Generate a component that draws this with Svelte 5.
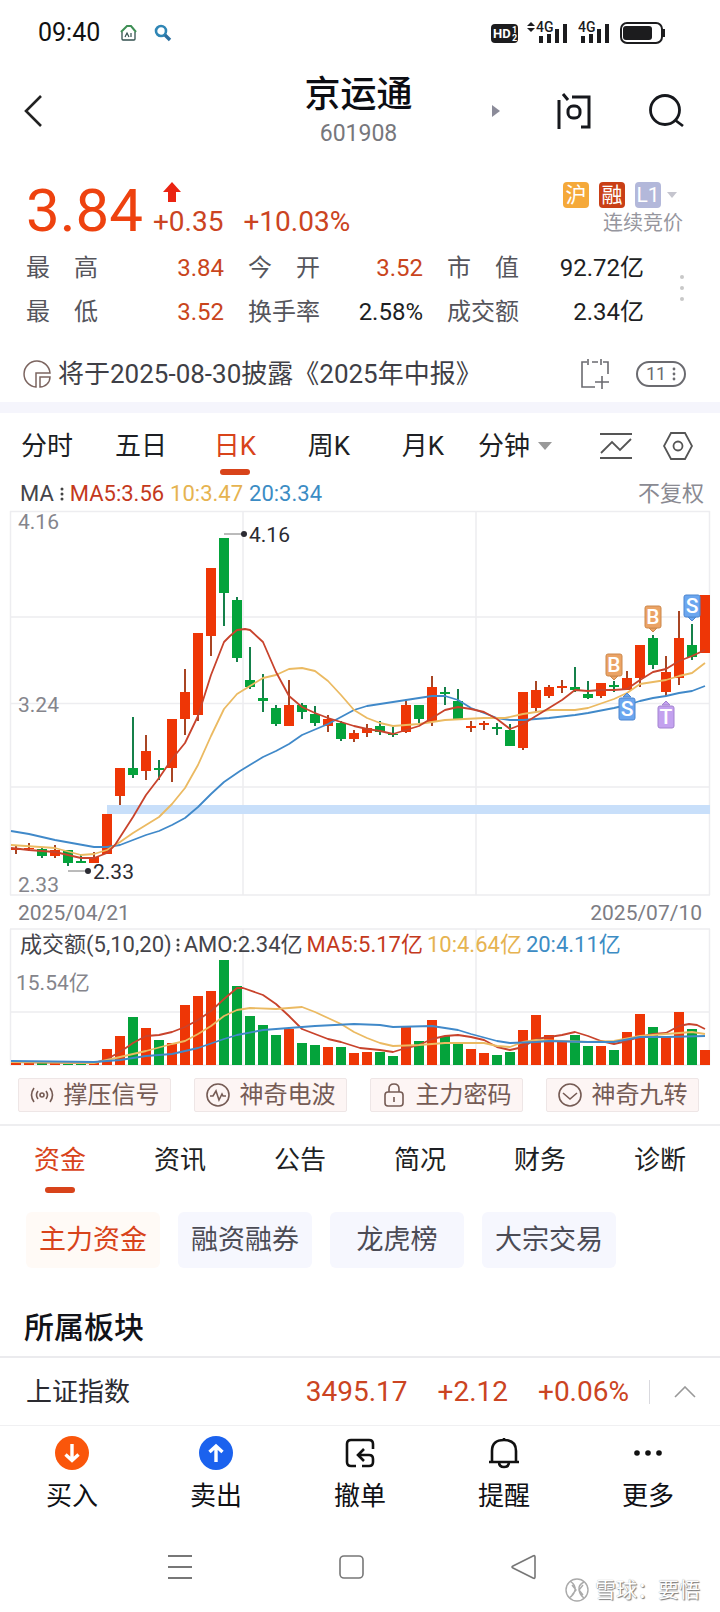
<script>
  let period = $state("日K");
  let section = $state("资金");
  let topic = $state("主力资金");

  const stats = [
    { label: "最高", value: "3.84", up: true },
    { label: "今开", value: "3.52", up: true },
    { label: "市值", value: "92.72亿" },
    { label: "最低", value: "3.52", up: true },
    { label: "换手率", value: "2.58%" },
    { label: "成交额", value: "2.34亿" },
  ];

  const periods = ["分时", "五日", "日K", "周K", "月K"];
  const sections = ["资金", "资讯", "公告", "简况", "财务", "诊断"];
  const topics = ["主力资金", "融资融券", "龙虎榜", "大宗交易"];
  const tools = ["撑压信号", "神奇电波", "主力密码", "神奇九转"];

  // [up, high, body top, body bottom, low, turnover top]
  const candles = [
    [1, 346, 349, 351, 355, 164], [1, 344, 349, 350, 352, 164],
    [0, 349, 350, 357, 359, 164], [1, 346, 351, 357, 359, 164],
    [0, 351, 351, 364, 367, 165], [0, 355, 362, 364, 364, 165],
    [1, 353, 358, 364, 364, 164], [1, 315, 315, 355, 355, 150],
    [1, 269, 269, 297, 306, 137], [0, 218, 269, 276, 279, 118],
    [1, 236, 252, 272, 281, 129], [0, 261, 269, 271, 281, 141],
    [1, 220, 220, 269, 283, 144], [1, 170, 193, 220, 236, 106],
    [1, 134, 134, 216, 222, 97], [1, 69, 69, 137, 157, 92],
    [0, 39, 39, 94, 127, 61], [0, 98, 101, 159, 163, 87],
    [0, 148, 181, 188, 190, 117], [0, 175, 199, 202, 213, 126],
    [0, 206, 209, 225, 227, 136], [1, 181, 206, 227, 227, 130],
    [0, 204, 206, 213, 220, 144], [0, 207, 215, 224, 227, 146],
    [1, 216, 220, 227, 233, 148], [0, 222, 224, 240, 242, 148],
    [1, 231, 234, 240, 243, 154], [1, 225, 229, 234, 238, 153],
    [0, 222, 227, 233, 236, 153], [0, 228, 235, 236, 238, 157],
    [1, 202, 206, 233, 234, 128], [0, 206, 206, 220, 224, 142],
    [1, 177, 188, 223, 227, 121], [0, 188, 193, 195, 206, 137],
    [0, 190, 202, 220, 220, 144], [1, 222, 227, 229, 233, 150],
    [1, 222, 224, 226, 231, 154], [0, 224, 228, 230, 236, 156],
    [0, 225, 231, 247, 247, 153], [1, 193, 193, 249, 251, 131],
    [1, 182, 191, 209, 213, 116], [1, 186, 188, 197, 199, 136],
    [1, 181, 187, 189, 194, 143], [0, 168, 188, 191, 193, 136],
    [0, 182, 195, 199, 200, 147], [1, 184, 184, 197, 199, 147],
    [0, 182, 186, 188, 193, 151], [1, 172, 179, 191, 191, 133],
    [1, 146, 146, 179, 188, 115], [0, 136, 139, 166, 170, 128],
    [1, 157, 173, 193, 197, 138], [1, 112, 139, 179, 186, 113],
    [0, 125, 146, 158, 161, 130], [1, 96, 96, 154, 154, 151],
  ].map(([up, high, top, bottom, low, volume], i) => ({
    x: 16 + i * 13, up, high, top, bottom, low, volume,
  }));

  const priceLines = [
    { name: "ma20", points: "11,332 29,335 55,341 94,348 107,348 120,346 146,336 159,332 172,326 185,319 198,308 211,295 224,283 240,272 263,258 276,252 289,245 302,236 328,225 354,211 367,207 393,203 406,201 432,197 445,197 458,201 471,209 484,214 497,219 510,221 523,221 549,219 575,216 588,214 614,209 627,206 640,202 653,199 666,197 679,194 692,192 705,187" },
    { name: "ma10", points: "11,346 55,349 81,356 94,355 107,351 120,343 133,334 159,318 172,305 185,289 198,266 211,237 224,210 237,195 250,187 263,179 276,176 289,170 302,169 315,172 328,182 341,196 354,211 367,219 380,224 393,227 419,225 445,221 484,219 505,219 523,215 549,211 575,211 588,209 614,200 627,194 640,185 666,181 679,177 692,174 705,164" },
    { name: "ma5", points: "11,349 29,351 55,353 68,356 81,359 94,359 107,354 115,346 133,318 146,296 159,279 172,260 185,244 198,217 211,176 224,143 230,137 237,131 245,130 250,131 263,143 276,173 289,197 302,208 315,214 328,219 341,223 354,227 367,230 380,232 393,235 406,231 419,227 432,219 445,211 458,208 471,210 484,213 497,220 510,230 523,225 536,217 549,209 562,201 575,191 588,192 601,191 614,191 627,190 640,181 653,173 666,170 679,162 692,157 705,151" },
  ];

  const volumeLines = [
    { name: "ma5", points: "11,163 94,164 107,160 120,153 133,144 146,137 159,136 172,133 185,128 198,121 211,112 224,100 237,89 243,89 263,96 276,105 289,117 302,130 315,135 328,140 341,143 360,149 380,151 393,153 406,149 419,146 432,140 445,137 458,136 471,138 484,141 497,148 510,151 523,148 536,140 549,138 562,136 575,133 588,137 601,142 614,145 627,142 640,138 653,135 666,134 679,127 689,125 697,126 705,130" },
    { name: "ma10", points: "11,163 94,164 120,158 146,152 172,145 185,142 198,135 211,127 224,117 237,111 250,109 276,110 302,108 315,113 328,119 341,125 354,133 367,139 380,144 393,147 419,146 445,144 484,144 497,147 510,148 523,143 536,141 562,142 588,143 614,142 640,137 666,135 692,133 705,135" },
    { name: "ma20", points: "11,162 94,163 120,161 146,157 172,155 198,149 224,140 237,136 263,131 289,129 315,127 354,125 380,126 393,128 432,127 458,131 471,135 497,142 510,144 536,143 549,142 588,143 614,143 640,138 666,138 705,137" },
  ];

  const marks = [
    { letter: "B", x: 614, y: 154 },
    { letter: "B", x: 653, y: 106 },
    { letter: "S", x: 692, y: 95 },
    { letter: "S", x: 627, y: 198, below: true },
    { letter: "T", x: 666, y: 206, below: true },
  ];
</script>

<div class="app">
  <div class="status">
    <span class="time">09:40</span>
    <svg width="18" height="18" viewBox="0 0 18 18" fill="none">
      <path d="M2 8v7q0 1 1 1h11q1 0 1-1V8" stroke="#33504f" stroke-width="1.3" />
      <path d="M1 8 7 2h4l5 6" stroke="#3f8f55" stroke-width="2" />
      <path d="m5 13 2-4 2 4M11 9v4" stroke="#33504f" stroke-width="1.2" />
    </svg>
    <svg class="lens" width="18" height="18" viewBox="0 0 18 18" fill="none">
      <circle cx="7" cy="7" r="5" stroke="#2f86b5" stroke-width="2.6" />
      <path d="m11 11 5 5" stroke="#2c6fa0" stroke-width="3.4" />
    </svg>
    <svg class="hd" width="28" height="26" viewBox="0 -3 28 26">
      <rect width="27" height="19" y="1" rx="4" fill="#1c1c1e" />
      <text x="2" y="15" font-size="13" font-weight="700" fill="#fff">HD</text>
      <text x="21" y="10" font-size="9" font-weight="700" fill="#fff">1</text>
      <text x="21" y="18" font-size="9" font-weight="700" fill="#fff">2</text>
    </svg>
    <svg width="42" height="30" viewBox="0 -4 42 30" fill="#1c1c1e">
      <path d="M0 4 4 0l4 4zM0 6l4 4 4-4z" />
      <text x="9" y="10" font-size="14" font-weight="500">4G</text>
      <path d="M12 14h4v7h-4zM20 12h4v9h-4zM28 7h4v14h-4zM36 2h4v19h-4z" />
    </svg>
    <svg width="32" height="30" viewBox="0 -4 32 30" fill="#1c1c1e">
      <text x="0" y="10" font-size="14" font-weight="500">4G</text>
      <path d="M3 14h4v7H3zM11 12h4v9h-4zM19 7h4v14h-4zM27 2h4v19h-4z" />
    </svg>
    <svg class="battery" width="46" height="22" viewBox="0 0 46 22">
      <rect x="1" y="1" width="41" height="20" rx="6" fill="none" stroke="#1c1c1e" stroke-width="2" />
      <rect x="3" y="4" width="29" height="14" rx="3" fill="#1c1c1e" />
      <path d="M44 7v8" stroke="#1c1c1e" stroke-width="2" />
    </svg>
  </div>

  <header>
    <button class="back" aria-label="返回">
      <svg width="20" height="34" viewBox="0 0 20 34" fill="none" stroke="#222" stroke-width="2.6">
        <path d="M18 2 3 17l15 15" />
      </svg>
    </button>
    <div class="name">
      <h1>京运通</h1>
      <span>601908</span>
    </div>
    <div class="header-actions">
      <button aria-label="下一只">
        <svg width="8" height="12" viewBox="0 0 8 12"><path d="M0 0v12l8-6z" fill="#8b8b99" /></svg>
      </button>
      <button aria-label="问">
        <svg width="36" height="38" viewBox="0 0 36 38" fill="none" stroke="#16181d" stroke-width="3">
          <path d="M3 8v29M7 2l5 6M16 5h17v30h-8" />
          <rect x="12" y="14" width="12" height="12" rx="5" />
        </svg>
      </button>
      <button aria-label="搜索">
        <svg width="36" height="36" viewBox="0 0 36 36" fill="none" stroke="#16181d" stroke-width="2.8">
          <circle cx="17" cy="17" r="14.5" />
          <path d="m27 27 8 6" />
        </svg>
      </button>
    </div>
  </header>

  <section class="quote">
    <div class="price">
      <strong>3.84</strong>
      <div class="change">
        <svg width="18" height="20" viewBox="0 0 18 20"><path d="M9 0 0 10h5v10h8V10h5z" fill="#ea2412" /></svg>
        <div><span>+0.35</span><span>+10.03%</span></div>
      </div>
      <div class="market">
        <div class="badges">
          <i class="hu">沪</i>
          <i class="rong">融</i>
          <i class="level">L1</i>
          <svg width="10" height="6" viewBox="0 0 10 6"><path d="M0 0h10L5 6z" fill="#c5c5ce" /></svg>
        </div>
        <span>连续竞价</span>
      </div>
    </div>
    <div class="stats">
      <dl>
        {#each stats as stat}
          <div>
            <dt>{#each stat.label as char}<span>{char}</span>{/each}</dt>
            <dd class:up={stat.up}>{stat.value}</dd>
          </div>
        {/each}
      </dl>
      <button aria-label="更多指标">
        <svg width="4" height="28" viewBox="0 0 4 28" fill="#c8c8c8">
          <circle cx="2" cy="3" r="2" /><circle cx="2" cy="14" r="2" /><circle cx="2" cy="25" r="2" />
        </svg>
      </button>
    </div>
    <div class="notice">
      <svg width="30" height="30" viewBox="0 0 30 30" fill="none" stroke="#7c6560" stroke-width="1.5">
        <path d="M14 28A13 13 0 1 1 28 14H14z" />
        <path d="M18 28V18h10a10 10 0 0 1-10 10z" />
      </svg>
      <p>将于2025-08-30披露《2025年中报》</p>
      <button aria-label="添加日程">
        <svg width="30" height="30" viewBox="0 0 30 30" fill="none" stroke="#6b6b70" stroke-width="1.6">
          <path d="M7 3H2v25h13M12 3h6M23 3h5v12M8 0v6M21 0v6M22 17v13M15 23h14" />
        </svg>
      </button>
      <button class="count">
        11
        <svg width="4" height="14" viewBox="0 0 4 14" fill="#6b6b70">
          <circle cx="2" cy="2" r="1.4" /><circle cx="2" cy="7" r="1.4" /><circle cx="2" cy="12" r="1.4" />
        </svg>
      </button>
    </div>
  </section>

  <nav class="periods">
    {#each periods as item}
      <button class="period" class:active={period === item} onclick={() => (period = item)}>{item}</button>
    {/each}
    <button class="minutes" class:active={period === "分钟"} onclick={() => (period = "分钟")}>
      分钟
      <svg width="14" height="8" viewBox="0 0 14 8"><path d="M0 0h14L7 8z" fill="#999" /></svg>
    </button>
    <button class="indicator" aria-label="指标">
      <svg width="32" height="26" viewBox="0 0 32 26" fill="none" stroke="#555" stroke-width="1.8">
        <path d="M0 1h32M0 25h32M1 20 12 9l8 8L31 6" />
      </svg>
    </button>
    <button aria-label="设置">
      <svg width="30" height="28" viewBox="0 0 30 28" fill="none" stroke="#555" stroke-width="1.8">
        <path d="M8 1h14l7 13-7 13H8L1 14z" />
        <circle cx="15" cy="14" r="4.5" />
      </svg>
    </button>
  </nav>

  <div class="legend">
    <span>MA</span>
    <svg width="4" height="14" viewBox="0 0 4 14" fill="#444">
      <circle cx="2" cy="2" r="1.5" /><circle cx="2" cy="7" r="1.5" /><circle cx="2" cy="12" r="1.5" />
    </svg>
    <span class="t5">MA5:3.56</span>
    <span class="t10">10:3.47</span>
    <span class="t20">20:3.34</span>
    <span class="adjust">不复权</span>
  </div>

  <svg class="chart" viewBox="0 10 720 390">
    <path class="grid" d="M10 12.500H710M10 118H710M10 204.500H710M10 288H710M10 396H710M10.500 12V396M243 12V396M476 12V396M709.500 12V396" />
    <rect x="107" y="306" width="603" height="9" fill="#c8dffa" />
    {#each candles as c}
      <g class={c.up ? "rise" : "fall"}>
        <rect class="wick" x={c.x - 1} y={c.high} width="2" height={c.low - c.high} />
        <rect x={c.x - 5} y={c.top} width="10" height={c.bottom - c.top} />
      </g>
    {/each}
    {#each priceLines as line}
      <polyline class={line.name} points={line.points} />
    {/each}
    {#each marks as m}
      <g class="mark {m.letter}">
        <path d={m.below ? `M${m.x - 4} ${m.y}l4-4 4 4z` : `M${m.x - 4} ${m.y + 23}l4 4 4-4z`} />
        <rect x={m.x - 8} y={m.y + 1} width="16" height="22" rx="2" />
        <text x={m.x} y={m.y + 19} text-anchor="middle">{m.letter}</text>
      </g>
    {/each}
    <g class="axis">
      <text x="18" y="30">4.16</text>
      <text x="18" y="213">3.24</text>
      <text x="18" y="393">2.33</text>
    </g>
    <g class="peak">
      <path d="M224 35h18M68 372h18" stroke="#777" />
      <circle cx="244" cy="35" r="3" /><text x="249" y="43">4.16</text>
      <circle cx="88" cy="372" r="3" /><text x="93" y="380">2.33</text>
    </g>
  </svg>

  <div class="dates"><span>2025/04/21</span><span>2025/07/10</span></div>

  <div class="volume">
    <div class="legend volume-legend">
      <span>成交额(5,10,20)</span>
      <svg width="4" height="14" viewBox="0 0 4 14" fill="#444">
        <circle cx="2" cy="2" r="1.5" /><circle cx="2" cy="7" r="1.5" /><circle cx="2" cy="12" r="1.5" />
      </svg>
      <span>AMO:2.34亿</span>
      <span class="t5">MA5:5.17亿</span>
      <span class="t10">10:4.64亿</span>
      <span class="t20">20:4.11亿</span>
    </div>
    <svg class="chart" viewBox="0 29 720 138">
      <path class="grid" d="M10 30H710M10 113H710M10 166H710M10.500 30V166M243 30V166M476 30V166M709.500 30V166" />
      {#each candles as c}
        <rect class={c.up ? "rise" : "fall"} x={c.x - 5} y={c.volume} width="10" height={166 - c.volume} />
      {/each}
      {#each volumeLines as line}
        <polyline class={line.name} points={line.points} />
      {/each}
      <text class="axis" x="16" y="91">15.54亿</text>
    </svg>
  </div>

  <div class="tools">
    {#each tools as tool, i}
      <button>
        <svg width="24" height="24" viewBox="0 0 24 24" fill="none" stroke="#755b54" stroke-width="1.6">
          {#if i === 0}
            <circle cx="12" cy="12" r="2" />
            <path d="M8 8q-3 4 0 8M16 8q3 4 0 8M4 5q-5 7 0 14M20 5q5 7 0 14" />
          {:else if i === 1}
            <circle cx="12" cy="12" r="11" />
            <path d="M4 13h3l3-5 3 9 3-6 1 2h3" />
          {:else if i === 2}
            <rect x="3" y="9" width="18" height="14" rx="3" />
            <path d="M7 9V6q0-5 5-5t5 5v3M12 14v5" />
          {:else}
            <circle cx="12" cy="12" r="11" />
            <path d="m5 10 7 6 7-6" />
          {/if}
        </svg>
        {tool}
      </button>
    {/each}
  </div>

  <nav class="sections">
    {#each sections as item}
      <button class:active={section === item} onclick={() => (section = item)}>{item}</button>
    {/each}
  </nav>

  <div class="topics">
    {#each topics as item}
      <button class:active={topic === item} onclick={() => (topic = item)}>{item}</button>
    {/each}
  </div>

  <h2>所属板块</h2>

  <div class="index">
    <span class="index-name">上证指数</span>
    <span>3495.17</span>
    <span>+2.12</span>
    <span>+0.06%</span>
    <button aria-label="展开">
      <svg width="22" height="12" viewBox="0 0 22 12" fill="none" stroke="#999" stroke-width="1.6">
        <path d="M1 11 11 1l10 10" />
      </svg>
    </button>
  </div>

  <nav class="trade">
    <button>
      <svg width="34" height="34" viewBox="0 0 34 34" fill="none" stroke="#fff" stroke-width="3.4">
        <circle cx="17" cy="17" r="17" fill="#fa560b" stroke="none" />
        <path d="M17 8v16M10.500 18.500l6.500 6 6.500-6" />
      </svg>
      买入
    </button>
    <button>
      <svg width="34" height="34" viewBox="0 0 34 34" fill="none" stroke="#fff" stroke-width="3.4">
        <circle cx="17" cy="17" r="17" fill="#1b62ee" stroke="none" />
        <path d="M17 26V10M10.500 16l6.500-6 6.500 6" />
      </svg>
      卖出
    </button>
    <button>
      <svg width="34" height="34" viewBox="0 0 34 34" fill="none" stroke="#111" stroke-width="2.6">
        <path d="M13 30H8q-4 0-4-4V8q0-4 4-4h18q4 0 4 4v5M19 30h7q4 0 4-4v-3q0-4-4-4H16M21 13l-6 6 6 6" />
      </svg>
      撤单
    </button>
    <button>
      <svg width="34" height="34" viewBox="0 0 34 34" fill="none" stroke="#111" stroke-width="2.6">
        <path d="M5 26V15q0-11 12-11t12 11v11M2 26h30M12 26q0 5 5 5t5-5M17 2v3" />
      </svg>
      提醒
    </button>
    <button>
      <svg width="34" height="34" viewBox="0 0 34 34" fill="#111">
        <circle cx="6" cy="17" r="2.800" /><circle cx="17" cy="17" r="2.800" /><circle cx="28" cy="17" r="2.800" />
      </svg>
      更多
    </button>
  </nav>

  <footer>
    <div class="system">
      <button aria-label="任务">
        <svg width="26" height="26" viewBox="0 0 26 26" stroke="#777" stroke-width="1.8"><path d="M1 2h24M1 13h24M1 24h24" /></svg>
      </button>
      <button aria-label="主页">
        <svg width="26" height="26" viewBox="0 0 26 26" fill="none" stroke="#777" stroke-width="1.6"><rect x="1" y="2" width="23" height="22" rx="4" /></svg>
      </button>
      <button aria-label="后退">
        <svg width="26" height="26" viewBox="0 0 26 26" fill="none" stroke="#777" stroke-width="1.6"><path d="M2 12 22 2q2-1 2 1v20q0 2-2 1L2 14q-2-1 0-2z" /></svg>
      </button>
    </div>
    <div class="watermark">
      <svg width="24" height="24" viewBox="0 0 24 24" fill="none" stroke="#aaa" stroke-width="1.4">
        <circle cx="12" cy="12" r="11" />
        <path d="M5 3q6 4 5 9t-6 8M19 4q-6 3-5 8t5 8M7 7l4 5-4 5M18 7l-4 5 4 5" />
      </svg>
      雪球：要悟
    </div>
  </footer>
</div>

<style>
  :global(body) {
    margin: 0;
    background: #fff;
  }

  .app {
    font-family: Roboto, "Noto Sans CJK SC", sans-serif;
    font-size: 26px;
    line-height: 32px;
    color: #1d1f24;
  }

  button {
    display: flex;
    align-items: center;
    justify-content: center;
    padding: 0;
    border: 0;
    background: none;
    font: inherit;
    color: inherit;
    cursor: pointer;
  }

  svg {
    display: block;
    flex: none;
  }

  .status {
    display: flex;
    align-items: center;
    height: 66px;
    padding: 0 54px 0 38px;
  }

  .time {
    margin-right: 20px;
    font-size: 25px;
    color: #111;
  }

  .lens {
    margin-left: 16px;
  }

  .hd {
    margin: 0 8px 0 auto;
  }

  .battery {
    margin-left: 10px;
  }

  .status svg + svg:nth-last-child(2) {
    margin-left: 9px;
  }

  header {
    display: grid;
    grid-template-columns: 1fr auto 1fr;
    align-items: center;
    height: 90px;
    padding: 0 36px 0 23px;
  }

  .back {
    justify-self: start;
  }

  .name {
    display: flex;
    flex-direction: column;
    align-items: center;
    padding: 2px 0 0 10px;
  }

  h1 {
    margin: 0;
    font-size: 36px;
    line-height: 44px;
    font-weight: 500;
    color: #0c0d12;
  }

  .name span {
    font-size: 23px;
    line-height: 34px;
    color: #77777c;
  }

  .header-actions {
    display: flex;
    justify-content: flex-end;
    gap: 56px;
  }

  .quote {
    padding: 16px 34px 0 26px;
    border-bottom: 11px solid #f5f5fc;
  }

  .price {
    display: flex;
    height: 66px;
    align-items: flex-end;
  }

  .price strong {
    font-size: 60px;
    line-height: 54px;
    font-weight: 400;
    color: #ee420f;
  }

  .change {
    display: flex;
    flex-direction: column;
    gap: 4px;
    margin-left: 10px;
    font-size: 28px;
    color: #cb4422;
  }

  .change svg {
    margin-left: 10px;
  }

  .change div {
    display: flex;
    gap: 20px;
  }

  .market {
    display: flex;
    flex-direction: column;
    align-items: flex-end;
    margin-left: auto;
    padding-right: 3px;
    font-size: 20px;
    line-height: 30px;
    color: #96969e;
  }

  .badges {
    display: flex;
    align-items: center;
    gap: 10px;
    margin-right: 6px;
  }

  .badges svg {
    margin-left: -4px;
  }

  .badges i {
    width: 26px;
    border-radius: 4px;
    font-size: 21px;
    line-height: 26px;
    font-style: normal;
    text-align: center;
    color: #fff;
  }

  .hu {
    background: #f5a93a;
  }

  .rong {
    background: #c93f16;
  }

  .level {
    background: #b3b8da;
  }

  .stats {
    display: flex;
    align-items: center;
    justify-content: space-between;
    padding: 14px 2px 0 0;
  }

  .stats button {
    height: 40px;
    margin-bottom: 4px;
  }

  dl {
    display: grid;
    grid-template-columns: 198px 175px 197px;
    column-gap: 24px;
    row-gap: 12px;
    margin: 0;
    font-size: 24px;
  }

  dl div {
    display: flex;
    justify-content: space-between;
  }

  dt {
    display: flex;
    justify-content: space-between;
    width: 72px;
    color: #55555c;
  }

  dd {
    margin: 0;
  }

  dd.up {
    color: #c9451c;
  }

  .notice {
    display: flex;
    align-items: center;
    height: 56px;
    padding-top: 18px;
    margin-left: -4px;
  }

  .notice svg {
    margin-right: 6px;
  }

  .notice p {
    flex: 1;
    margin: 0;
    color: #3f3f46;
    white-space: nowrap;
  }

  .notice .count {
    width: 50px;
    height: 26px;
    margin-left: 20px;
    gap: 6px;
    border: 2px solid #6b6b70;
    border-radius: 14px;
    box-sizing: border-box;
    font-size: 18px;
    color: #6b6b70;
  }

  .count svg {
    margin: 0;
  }

  .periods {
    display: flex;
    height: 66px;
    padding-right: 27px;
  }

  .period {
    flex: 0 0 94px;
  }

  .periods button,
  .sections button {
    position: relative;
  }

  .minutes {
    gap: 8px;
    margin-left: 8px;
  }

  .indicator {
    margin: 0 31px 0 auto;
  }

  .periods .active,
  .sections .active {
    color: #d8431a;
  }

  .periods .active::after,
  .sections .active::after {
    content: "";
    position: absolute;
    bottom: 4px;
    left: calc(50% - 15px);
    width: 30px;
    height: 6px;
    border-radius: 3px;
    background: #d8431a;
  }

  .legend {
    display: flex;
    align-items: center;
    gap: 6px;
    height: 30px;
    padding: 0 16px 0 20px;
    font-size: 22px;
    color: #44444a;
  }

  .t5 {
    color: #c4391c;
  }

  .t10 {
    color: #e6b350;
  }

  .t20 {
    color: #3c8cc4;
  }

  .adjust {
    margin-left: auto;
    color: #8a8a92;
  }

  .chart {
    width: 100%;
    height: auto;
    font-size: 21px;
  }

  .grid {
    fill: none;
    stroke: #ededf0;
    stroke-width: 1.5;
  }

  .rise {
    fill: #ee3606;
  }

  .fall {
    fill: #04a33b;
  }

  .rise .wick {
    fill: #a84524;
  }

  .fall .wick {
    fill: #15804a;
  }

  polyline {
    fill: none;
    stroke-width: 1.8;
    stroke-linejoin: round;
  }

  .ma5 {
    stroke: #c8432c;
  }

  .ma10 {
    stroke: #ebba62;
  }

  .ma20 {
    stroke: #4089c9;
  }

  .B {
    fill: #eba365;
    stroke: #cc884c;
  }

  .S {
    fill: #6ba6ef;
    stroke: #4d86cf;
  }

  .T {
    fill: #c3a1ef;
    stroke: #a383d0;
  }

  .mark text {
    fill: #fff;
    stroke: none;
    font-size: 21px;
    font-weight: 500;
  }

  .axis {
    fill: #85858c;
  }

  .peak {
    fill: #2b2b32;
  }

  .dates {
    display: flex;
    justify-content: space-between;
    padding: 0 18px;
    font-size: 21px;
    line-height: 29px;
    color: #7d7d84;
  }

  .volume {
    position: relative;
  }

  .volume-legend {
    position: absolute;
    top: 2px;
    left: 0;
    gap: 4px;
    white-space: nowrap;
  }

  .tools {
    display: grid;
    grid-template-columns: repeat(4, 1fr);
    gap: 23px;
    padding: 12px 21px 12px 18px;
    border-bottom: 2px solid #eeeef0;
  }

  .tools button {
    height: 34px;
    gap: 10px;
    border: 1px solid #eee6e6;
    border-radius: 2px;
    background: #fdf5f4;
    box-sizing: border-box;
    font-size: 24px;
    color: #755b54;
  }

  .sections {
    display: grid;
    grid-template-columns: repeat(6, 1fr);
    height: 68px;
  }

  .sections .active::after {
    bottom: 1px;
  }

  .topics {
    display: flex;
    gap: 18px;
    padding: 18px 26px 38px;
  }

  .topics button {
    width: 134px;
    height: 56px;
    border-radius: 6px;
    background: #f6f7fe;
    font-size: 27px;
    color: #4b4b55;
  }

  .topics .active {
    background: #fffaf6;
    color: #d8431a;
  }

  h2 {
    margin: 0;
    padding: 0 24px 6px;
    font-size: 30px;
    line-height: 44px;
    font-weight: 500;
    color: #111218;
  }

  .index {
    display: flex;
    align-items: center;
    gap: 30px;
    height: 67px;
    padding: 0 24px 0 26px;
    border-top: 2px solid #ebebee;
    border-bottom: 1px solid #f0f0f2;
    font-size: 28px;
    color: #cb4422;
  }

  .index .index-name {
    margin-right: auto;
    font-size: 26px;
    color: #2a2a30;
  }

  .index button {
    height: 24px;
    padding-left: 24px;
    margin-left: -10px;
    border-left: 1px solid #d9d9de;
  }

  .trade {
    display: grid;
    grid-template-columns: repeat(5, 1fr);
    padding: 10px 0 0;
  }

  .trade button {
    flex-direction: column;
    gap: 10px;
    color: #0f1014;
  }

  footer {
    position: relative;
    padding: 42px 0 32px;
  }

  .system {
    display: flex;
    justify-content: center;
    gap: 146px;
    padding-right: 16px;
  }

  .watermark {
    position: absolute;
    right: 20px;
    bottom: 6px;
    display: flex;
    align-items: center;
    gap: 6px;
    font-size: 21px;
    color: #fff;
    text-shadow: 1px 1px 1px #777, 0 0 1px #999;
  }
</style>
